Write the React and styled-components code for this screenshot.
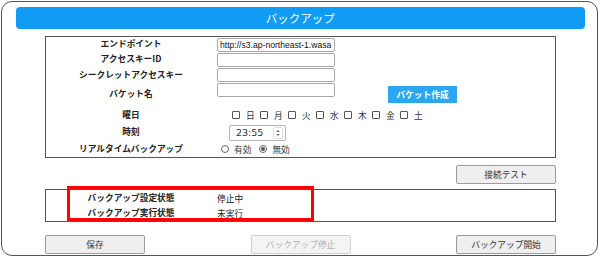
import styled, { createGlobalStyle } from "styled-components";

const GlobalStyle = createGlobalStyle`
  html, body {
    margin: 0;
    padding: 0;
    background: #ffffff;
  }
  body {
    font-family: "Noto Sans CJK JP", "Liberation Sans", sans-serif;
    color: #222;
  }
`;

const Frame = styled.div`
  box-sizing: border-box;
  width: 597px;
  height: 255px;
  margin: 1px 0 0 1px;
  border: 1.5px solid #555;
  border-radius: 11px;
  padding: 5px 12px 0 13.5px;
`;

const Header = styled.div`
  height: 22px;
  background: #109cf5;
  border-radius: 4px;
  color: #fff;
  font-size: 11.5px;
  line-height: 22px;
  text-align: center;
`;

const Body = styled.div`
  position: relative;
  padding: 0 29px 0 29.5px;
`;

const Box = styled.div`
  margin-top: ${(p) => p.$mt || 0}px;
  border: 1px solid #555;
  padding: ${(p) => p.$pad || "0"};
`;

const Row = styled.div`
  display: grid;
  grid-template-columns: 170px 1fr;
  column-gap: 1px;
  align-items: center;
  height: ${(p) => p.$h}px;
`;

const Label = styled.div`
  font-size: 8.7px;
  font-weight: bold;
  text-align: center;
  line-height: 1;
`;

const Cell = styled.div`
  display: flex;
  align-items: ${(p) => p.$align || "center"};
  height: 100%;
  padding-left: ${(p) => p.$pl || 0}px;
  font-size: 8.7px;
`;

const TextInput = styled.div`
  box-sizing: border-box;
  width: 118px;
  height: 14px;
  border: 1px solid #a8a8a8;
  border-radius: 2px;
  background: #fff;
  font-family: "Liberation Sans", Arial, sans-serif;
  font-size: 8.6px;
  line-height: 12px;
  padding-left: 2px;
  white-space: nowrap;
  overflow: hidden;
  color: #111;
`;

const BlueButton = styled.div`
  width: 69px;
  height: 17px;
  margin: 3px 0 0 53px;
  background: #2aa7f0;
  color: #fff;
  font-size: 8.7px;
  font-weight: bold;
  line-height: 17px;
  text-align: center;
`;

const Day = styled.span`
  display: inline-flex;
  align-items: center;
  width: 28px;
  font-size: 8.7px;
  color: #333;
`;

const Check = styled.span`
  box-sizing: border-box;
  width: 8px;
  height: 8px;
  border: 1px solid #555;
  border-radius: 1px;
  margin-right: 6px;
`;

const TimeInput = styled.div`
  box-sizing: border-box;
  display: flex;
  align-items: center;
  justify-content: space-between;
  width: 57px;
  height: 16px;
  border: 1px solid #b5b5b5;
  border-radius: 2px;
  padding: 0 2px 0 6px;
  font-family: "DejaVu Sans", sans-serif;
  font-size: 9.5px;
  color: #333;
`;

const Spinner = styled.div`
  display: flex;
  flex-direction: column;
  align-items: center;
  justify-content: center;
  width: 10px;
  height: 12px;
  border: 1px solid #ddd;
  border-radius: 2px;
  box-sizing: border-box;
  gap: 2px;
`;

const Arrow = styled.span`
  width: 0;
  height: 0;
  border-left: 2px solid transparent;
  border-right: 2px solid transparent;
  ${(p) => (p.$down ? "border-top: 2.5px solid #777;" : "border-bottom: 2.5px solid #777;")}
`;

const Radio = styled.span`
  box-sizing: border-box;
  display: inline-flex;
  align-items: center;
  justify-content: center;
  width: 8px;
  height: 8px;
  border: 1px solid #666;
  border-radius: 50%;
  margin-right: 5px;
  &::after {
    content: "";
    width: 4px;
    height: 4px;
    border-radius: 50%;
    background: ${(p) => (p.$on ? "#555" : "transparent")};
  }
`;

const RadioText = styled.span`
  font-size: 8.7px;
  color: #333;
  margin-right: ${(p) => p.$mr || 0}px;
`;

const ButtonRow = styled.div`
  display: flex;
  justify-content: ${(p) => p.$justify || "space-between"};
  margin-top: ${(p) => p.$mt}px;
`;

const Button = styled.div`
  box-sizing: border-box;
  width: 100px;
  height: 19px;
  border: 1px solid ${(p) => (p.$disabled ? "#cfcfcf" : "#9a9a9a")};
  border-radius: 2px;
  background: ${(p) => (p.$disabled ? "#f4f4f4" : "#efefef")};
  color: ${(p) => (p.$disabled ? "#b0b0b0" : "#333")};
  font-size: 8.7px;
  line-height: 17px;
  text-align: center;
`;

const Value = styled.span`
  font-size: 8.7px;
  color: #222;
`;

const Highlight = styled.div`
  position: absolute;
  left: 51px;
  top: 150px;
  width: 247px;
  height: 35px;
  box-sizing: border-box;
  border: 3px solid #ff0000;
  pointer-events: none;
`;

const days = ["日", "月", "火", "水", "木", "金", "土"];

export default function App() {
  return (
    <>
      <GlobalStyle />
      <Frame>
        <Header>バックアップ</Header>
        <Body>
          <Box $mt={7}>
            <Row $h={15}>
              <Label>エンドポイント</Label>
              <Cell>
                <TextInput>http://s3.ap-northeast-1.wasa</TextInput>
              </Cell>
            </Row>
            <Row $h={15}>
              <Label>アクセスキーID</Label>
              <Cell>
                <TextInput />
              </Cell>
            </Row>
            <Row $h={16}>
              <Label>シークレットアクセスキー</Label>
              <Cell>
                <TextInput />
              </Cell>
            </Row>
            <Row $h={23}>
              <Label>バケット名</Label>
              <Cell $align="flex-start">
                <TextInput />
                <BlueButton>バケット作成</BlueButton>
              </Cell>
            </Row>
            <Row $h={18}>
              <Label>曜日</Label>
              <Cell $pl={15}>
                {days.map((d) => (
                  <Day key={d}>
                    <Check />
                    {d}
                  </Day>
                ))}
              </Cell>
            </Row>
            <Row $h={17}>
              <Label>時刻</Label>
              <Cell $pl={12}>
                <TimeInput>
                  23:55
                  <Spinner>
                    <Arrow />
                    <Arrow $down />
                  </Spinner>
                </TimeInput>
              </Cell>
            </Row>
            <Row $h={16}>
              <Label>リアルタイムバックアップ</Label>
              <Cell $pl={4}>
                <Radio />
                <RadioText $mr={8}>有効</RadioText>
                <Radio $on />
                <RadioText>無効</RadioText>
              </Cell>
            </Row>
          </Box>

          <ButtonRow $justify="flex-end" $mt={7}>
            <Button>接続テスト</Button>
          </ButtonRow>

          <Box $mt={5} $pad="1px 0">
            <Row $h={15}>
              <Label>バックアップ設定状態</Label>
              <Cell>
                <Value>停止中</Value>
              </Cell>
            </Row>
            <Row $h={14}>
              <Label>バックアップ実行状態</Label>
              <Cell>
                <Value>未実行</Value>
              </Cell>
            </Row>
          </Box>

          <ButtonRow $mt={13}>
            <Button>保存</Button>
            <Button $disabled>バックアップ停止</Button>
            <Button>バックアップ開始</Button>
          </ButtonRow>

          <Highlight />
        </Body>
      </Frame>
    </>
  );
}
